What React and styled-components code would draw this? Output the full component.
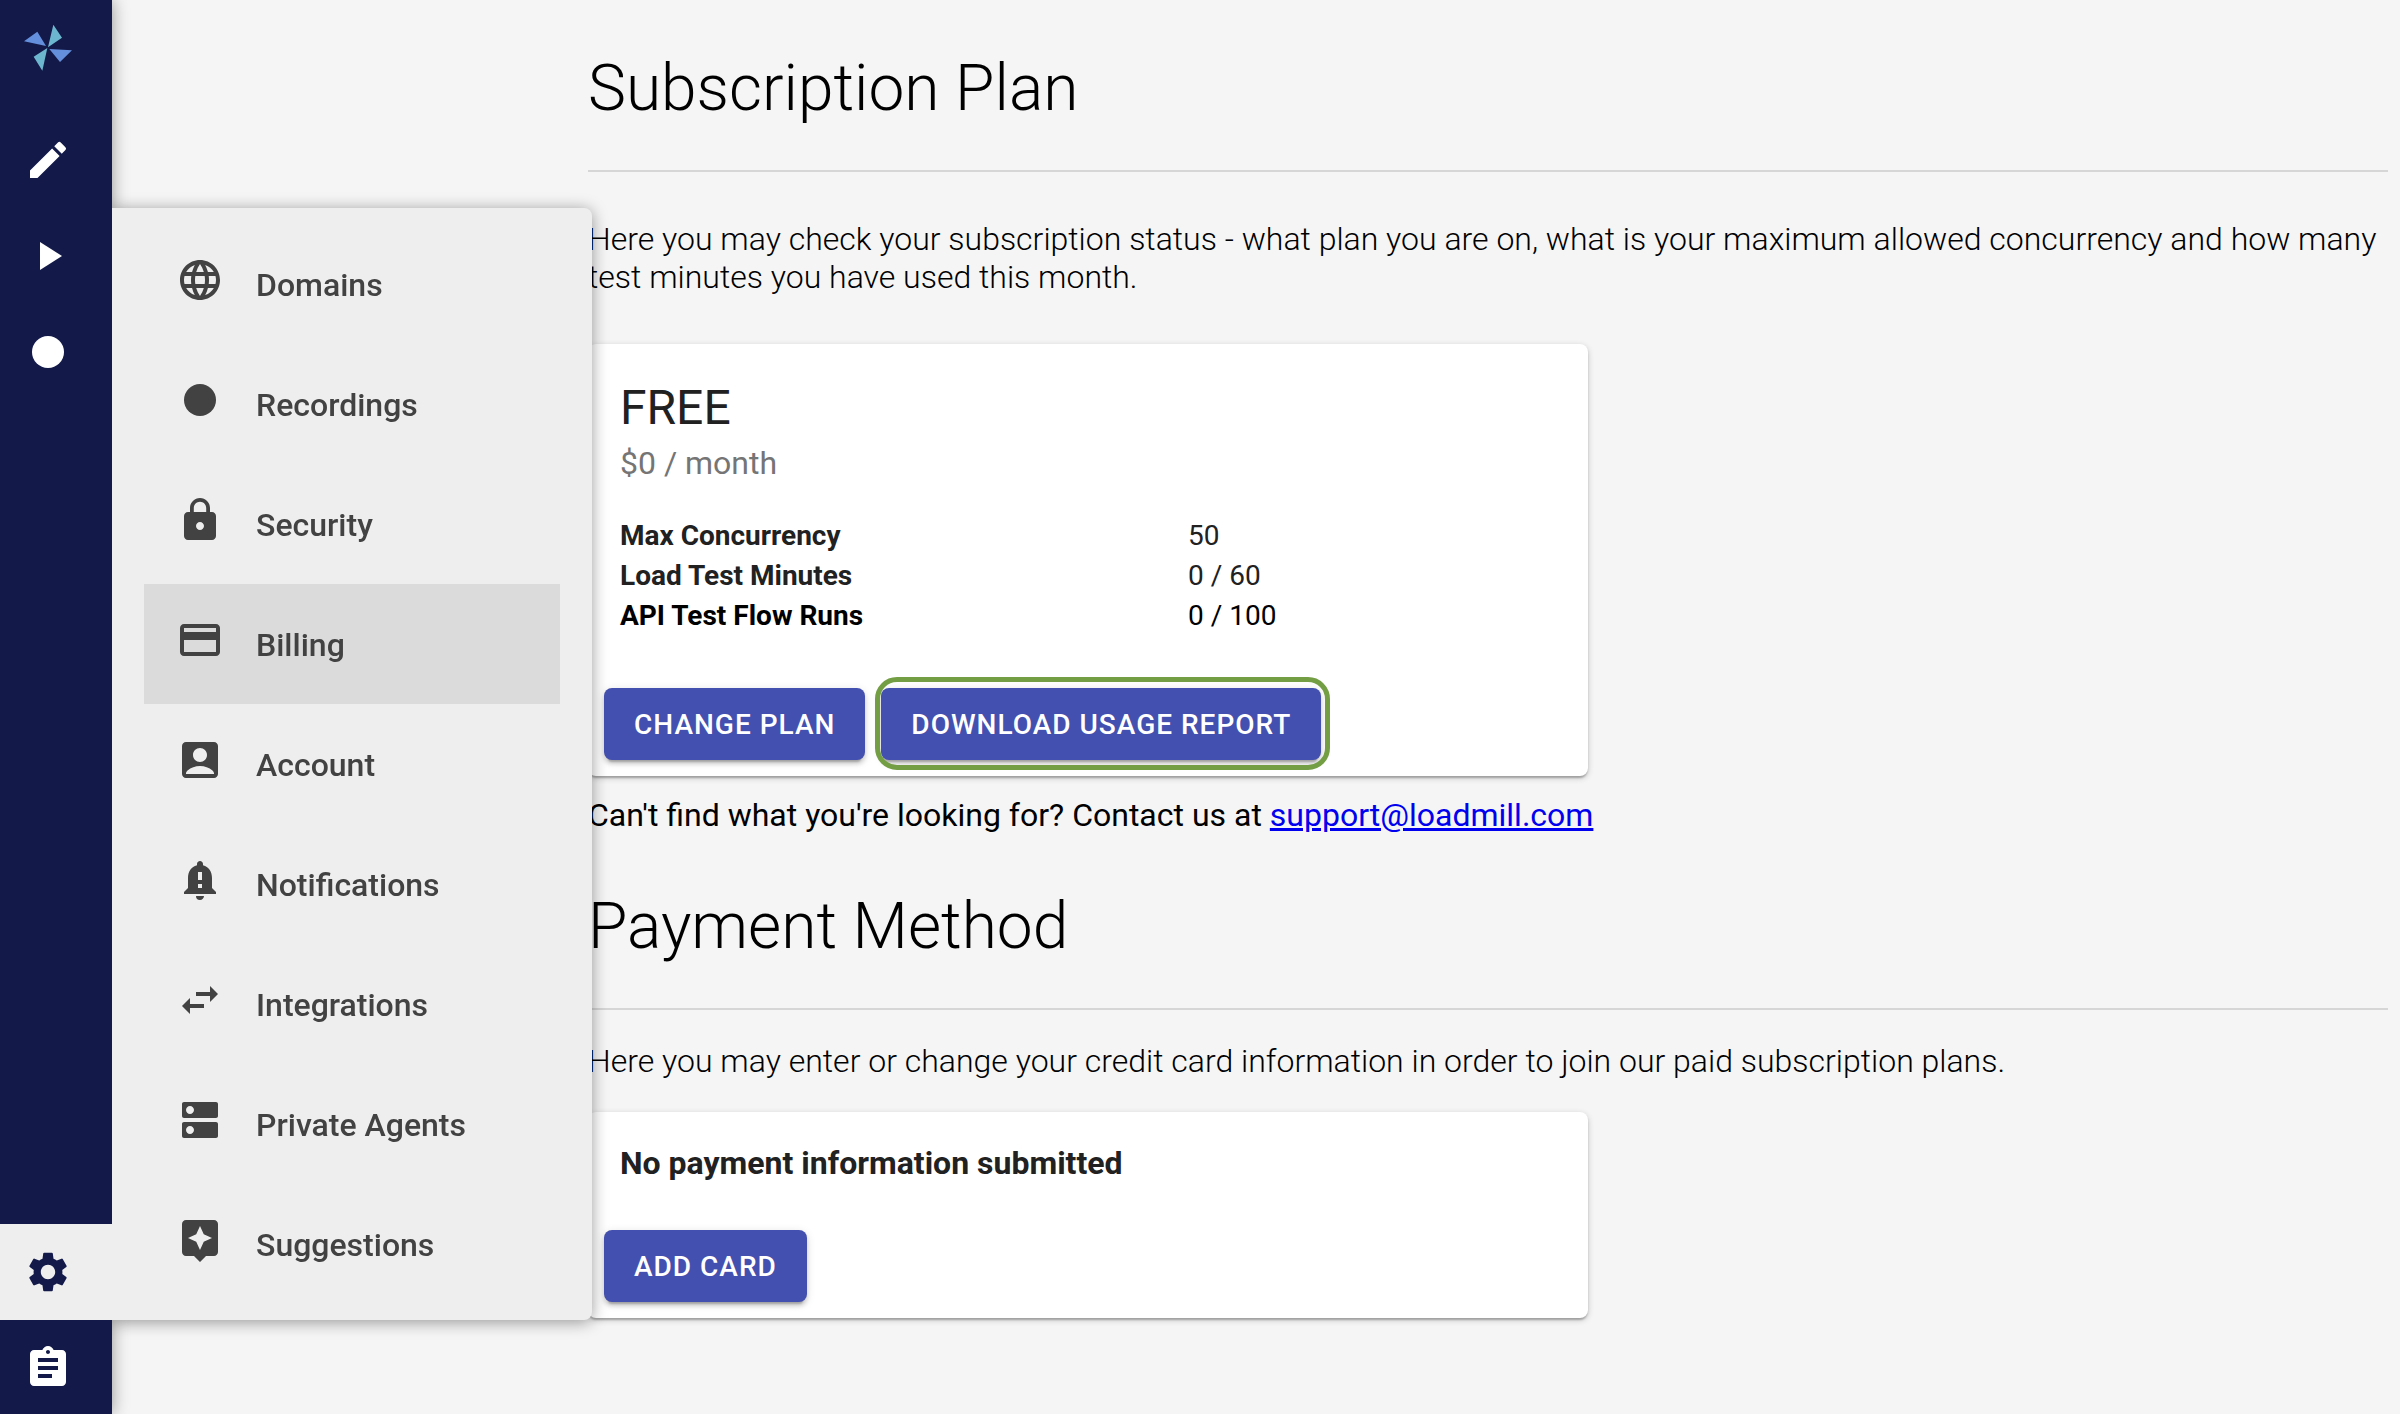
import React from "react";
import styled, { createGlobalStyle } from "styled-components";
import {
  MdAccountBox,
  MdAssignment,
  MdAssistant,
  MdCreditCard,
  MdDns,
  MdEdit,
  MdFiberManualRecord,
  MdLanguage,
  MdLock,
  MdNotificationImportant,
  MdPlayArrow,
  MdSettings,
  MdSwapHoriz,
} from "react-icons/md";

const GlobalStyle = createGlobalStyle`
  *, *::before, *::after { box-sizing: border-box; }
  body {
    margin: 0;
    background: #f5f5f5;
    color: #000;
    font-family: Roboto, "Liberation Sans", sans-serif;
    font-size: 32px;
    line-height: 38px;
  }
`;

const Page = styled.div`
  display: flex;
  min-height: 100vh;
`;

const Rail = styled.nav`
  position: sticky;
  top: 0;
  z-index: 2;
  display: flex;
  flex: none;
  flex-direction: column;
  justify-content: space-between;
  width: 112px;
  height: 100vh;
  background: #131a4a;
  box-shadow: 0 0 16px rgba(0, 0, 0, 0.4);
`;

const RailGroup = styled.div`
  display: flex;
  flex-direction: column;
`;

const RailFooter = styled(RailGroup)`
  margin-bottom: -2px;
`;

const RailSlot = styled.div`
  position: relative;
`;

const RailLink = styled.a`
  display: flex;
  align-items: center;
  height: 96px;
  padding-left: 24px;
  font-size: 48px;
  color: ${(p) => (p.$active ? "#131a4a" : "#fff")};
  background: ${(p) => (p.$active ? "#eee" : "transparent")};
`;

const HomeLink = styled(RailLink)`
  margin-bottom: 16px;
`;

const Menu = styled.ul`
  position: absolute;
  bottom: 0;
  left: 100%;
  width: 480px;
  margin: 0;
  padding: 16px 32px;
  list-style: none;
  background: #eee;
  border-radius: 0 8px 8px 0;
  box-shadow: 0 2px 16px rgba(0, 0, 0, 0.4);
  clip-path: inset(-32px -32px -32px 0);
`;

const MenuLink = styled.a`
  display: flex;
  gap: 32px;
  height: 120px;
  padding: 32px;
  color: #424242;
  font-weight: 500;
  line-height: 58px;
  text-decoration: none;
  background: ${(p) => (p.$active ? "#dbdbdb" : "transparent")};

  svg {
    flex: none;
    width: 48px;
    height: 48px;
  }
`;

const Main = styled.main`
  flex: 1;
  padding: 48px 12px 0 calc(25vw - 124px);
`;

const Title = styled.h1`
  margin: 0;
  padding-bottom: 40px;
  border-bottom: 2px solid #d6d6d6;
  font-size: 64px;
  font-weight: 300;
  line-height: 82px;
`;

const Intro = styled.p`
  margin: ${(p) => (p.$roomy ? "48px 0" : "32px 0")};
  font-weight: 300;
`;

const Card = styled.section`
  max-width: 1000px;
  background: #fff;
  color: #212121;
  border-radius: 8px;
  box-shadow: 0 2px 6px rgba(0, 0, 0, 0.2), 0 2px 2px rgba(0, 0, 0, 0.14),
    0 4px 2px -2px rgba(0, 0, 0, 0.12);
`;

const CardBody = styled.div`
  padding: 32px;
`;

const PlanName = styled.h2`
  margin: 0;
  font-size: 48px;
  font-weight: 400;
  line-height: 64px;
`;

const Price = styled.p`
  margin: 0 0 30px;
  color: #757575;
  line-height: 46px;
`;

const UsageTable = styled.table`
  margin-bottom: 36px;
  border-collapse: collapse;
  font-size: 28px;
  line-height: 40px;
`;

const UsageRow = styled.tr`
  color: ${(p) => (p.$strong ? "#000" : "inherit")};
`;

const UsageLabel = styled.th`
  width: 568px;
  padding: 0;
  font-weight: 700;
  text-align: left;
`;

const UsageValue = styled.td`
  padding: 0;
`;

const PlanBody = styled(CardBody)`
  padding-bottom: 0;
`;

const Notice = styled.p`
  margin: 0;
  font-weight: 700;
`;

const Actions = styled.div`
  display: flex;
  gap: 16px;
  padding: 16px;
`;

const Button = styled.button`
  position: relative;
  height: 72px;
  padding: 2px 30px 0;
  border: 0;
  border-radius: 8px;
  background: #4350af;
  color: #fff;
  font: 500 28px/40px Roboto, "Liberation Sans", sans-serif;
  letter-spacing: 1px;
  text-transform: uppercase;
  box-shadow: 0 6px 2px -4px rgba(0, 0, 0, 0.2), 0 4px 4px rgba(0, 0, 0, 0.14),
    0 2px 10px rgba(0, 0, 0, 0.12);
`;

const HighlightedButton = styled(Button)`
  &::after {
    content: "";
    position: absolute;
    inset: -11px -9px -10px -6px;
    border: 5px solid #739e43;
    border-radius: 22px;
    pointer-events: none;
  }
`;

const Contact = styled.p`
  margin: 20px 0 52px;
`;

const MailLink = styled.a`
  color: #0000ee;
  text-decoration: underline;
`;

const menu = [
  ["Domains", MdLanguage],
  ["Recordings", MdFiberManualRecord],
  ["Security", MdLock],
  ["Billing", MdCreditCard],
  ["Account", MdAccountBox],
  ["Notifications", MdNotificationImportant],
  ["Integrations", MdSwapHoriz],
  ["Private Agents", MdDns],
  ["Suggestions", MdAssistant],
];

const usage = [
  { label: "Max Concurrency", value: "50" },
  { label: "Load Test Minutes", value: "0 / 60" },
  { label: "API Test Flow Runs", value: "0 / 100", strong: true },
];

function Logo() {
  return (
    <svg width="48" height="48" viewBox="0 0 144 144" aria-hidden="true">
      <path fill="#648fdc" d="M0 52 40 23 66 66zM76 75l68 4-36 35z" />
      <path fill="#6db6d0" d="M88 2l26 39-42 29zM70 72 29 98l26 42z" />
    </svg>
  );
}

export default function App() {
  return (
    <>
      <GlobalStyle />
      <Page>
        <Rail aria-label="Main">
          <RailGroup>
            <HomeLink href="#home" aria-label="Home">
              <Logo />
            </HomeLink>
            <RailLink href="#editor" aria-label="Editor">
              <MdEdit />
            </RailLink>
            <RailLink href="#runs" aria-label="Runs">
              <MdPlayArrow />
            </RailLink>
            <RailLink href="#record" aria-label="Record">
              <MdFiberManualRecord />
            </RailLink>
          </RailGroup>
          <RailFooter>
            <RailSlot>
              <RailLink href="#settings" aria-label="Settings" $active>
                <MdSettings />
              </RailLink>
              <Menu>
                {menu.map(([label, Icon]) => (
                  <li key={label}>
                    <MenuLink href="#settings" $active={label === "Billing"}>
                      <Icon />
                      {label}
                    </MenuLink>
                  </li>
                ))}
              </Menu>
            </RailSlot>
            <RailLink href="#docs" aria-label="Docs">
              <MdAssignment />
            </RailLink>
          </RailFooter>
        </Rail>
        <Main>
          <Title>Subscription Plan</Title>
          <Intro $roomy>
            Here you may check your subscription status - what plan you are on,
            what is your maximum allowed concurrency and how many test minutes
            you have used this month.
          </Intro>
          <Card>
            <PlanBody>
              <PlanName>FREE</PlanName>
              <Price>$0 / month</Price>
              <UsageTable>
                <tbody>
                  {usage.map((row) => (
                    <UsageRow key={row.label} $strong={row.strong}>
                      <UsageLabel scope="row">{row.label}</UsageLabel>
                      <UsageValue>{row.value}</UsageValue>
                    </UsageRow>
                  ))}
                </tbody>
              </UsageTable>
            </PlanBody>
            <Actions>
              <Button type="button">Change plan</Button>
              <HighlightedButton type="button">
                Download usage report
              </HighlightedButton>
            </Actions>
          </Card>
          <Contact>
            Can't find what you're looking for? Contact us at{" "}
            <MailLink href="mailto:support@loadmill.com">
              support@loadmill.com
            </MailLink>
          </Contact>
          <Title as="h2">Payment Method</Title>
          <Intro>
            Here you may enter or change your credit card information in order
            to join our paid subscription plans.
          </Intro>
          <Card>
            <CardBody>
              <Notice>No payment information submitted</Notice>
            </CardBody>
            <Actions>
              <Button type="button">Add card</Button>
            </Actions>
          </Card>
        </Main>
      </Page>
    </>
  );
}
